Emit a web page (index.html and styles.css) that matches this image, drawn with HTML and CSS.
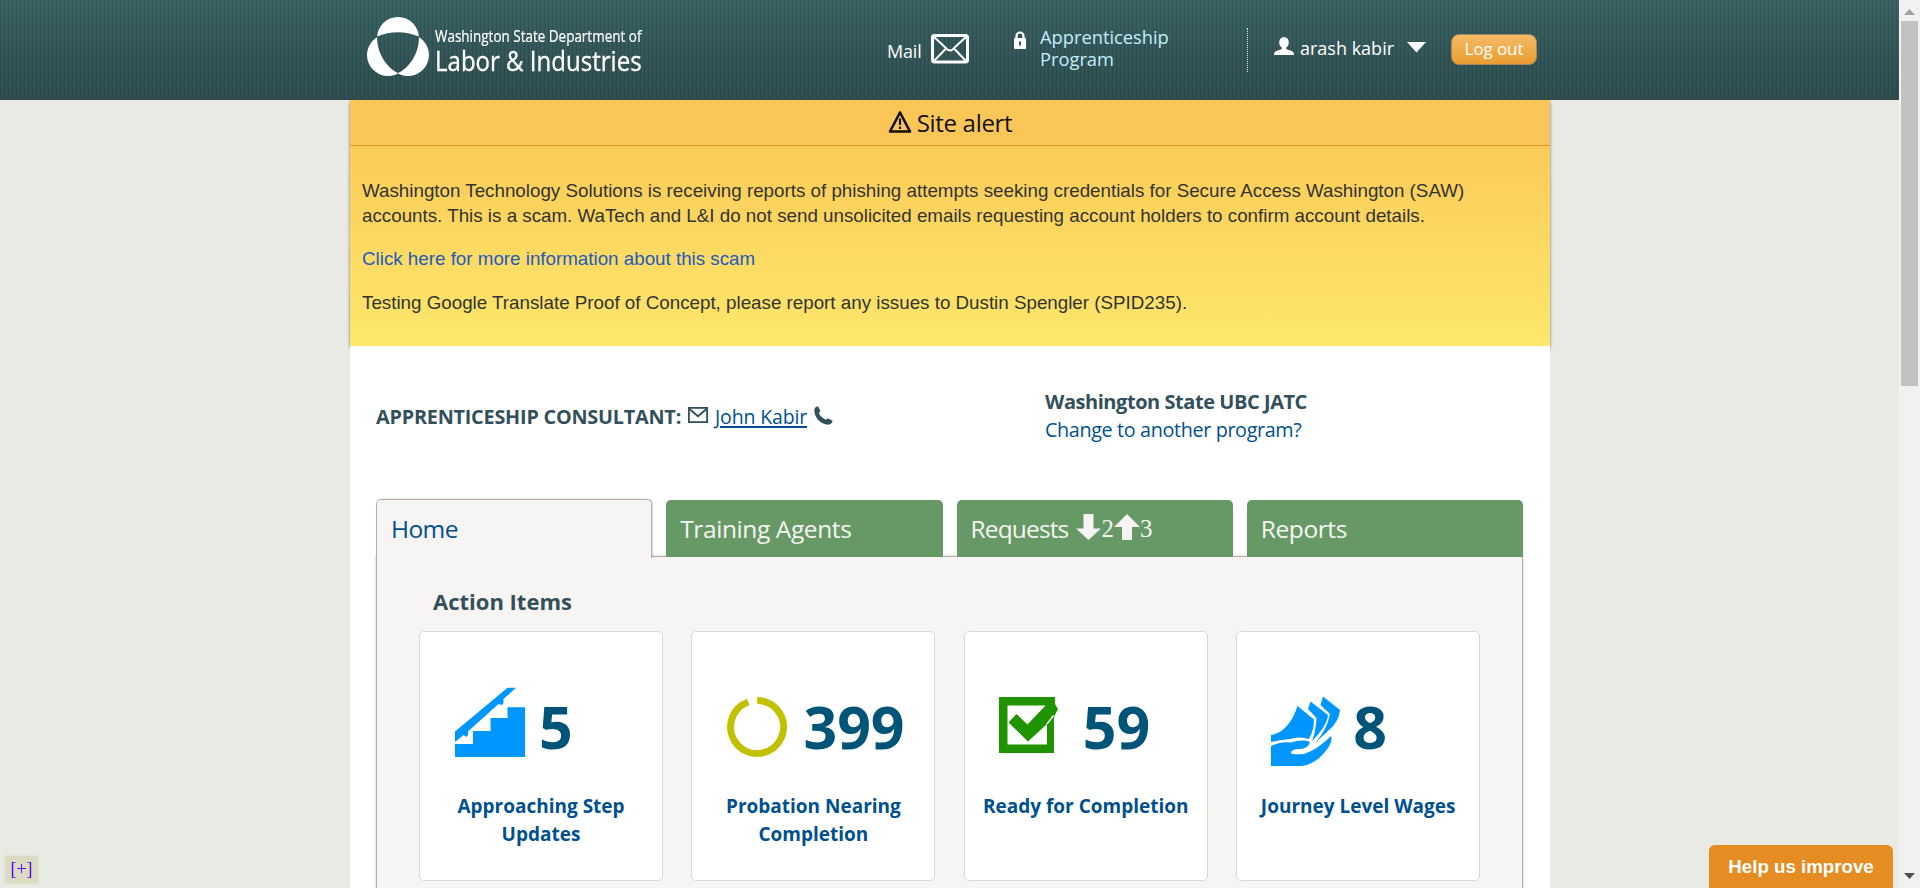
FILE: index.html
```html
<!DOCTYPE html>
<html lang="en">
<head>
<meta charset="utf-8">
<title>Apprenticeship Program</title>
<link rel="stylesheet" href="styles.css">
</head>
<body>
<div class="page">
  <header class="header">
    <div class="header-inner">
      <a class="logo">
        <svg class="logo-mark" width="64" height="62" viewBox="0 0 64 62">
          <defs><mask id="rings"><rect width="64" height="62" fill="#fff"/><path d="M11 20.500Q31.500 12 53 20.500C53 38 43 52 32 57C21 52 11 38 11 20.500z" fill="#000"/></mask></defs>
          <g mask="url(#rings)" fill="#fff"><circle cx="32" cy="22" r="21"/><circle cx="22" cy="39" r="21"/><circle cx="42" cy="39" r="21"/></g>
          <path d="M11.500 20.300Q9.500 21 8 22M52.500 20.300Q54.500 21 56 22" stroke="#325456" fill="none"/>
        </svg>
        <span class="logo-text"><span class="logo-small">Washington State Department of</span><span class="logo-big">Labor &amp; Industries</span></span>
      </a>
      <a class="mail">Mail</a>
      <svg class="mail-icon" width="38" height="30" viewBox="0 0 38 30" fill="none" stroke="#fff"><rect x="1.500" y="1.500" width="35" height="26.500" rx="2" stroke-width="3"/><path d="M2 2L16.500 15.500Q19 17.500 21.500 15.500L36 2M2.500 27.500L15 14.500M35.500 27.500L23 14.500" stroke-width="2"/></svg>
      <svg class="lock" width="12" height="18" viewBox="0 0 12 18"><path d="M2.500 8V5a3.500 3.500 0 0 1 7 0V8" fill="none" stroke="#fff" stroke-width="2.200"/><rect y="7" width="12" height="11" rx="1" fill="#fff"/><path d="M5 10.500h2v4H5z" fill="#325456"/></svg>
      <a class="program">Apprenticeship<br>Program</a>
      <div class="divider"></div>
      <svg class="user-icon" width="20" height="18" viewBox="0 0 20 18" fill="#fff"><ellipse cx="10" cy="5.500" rx="4.800" ry="5.500"/><path d="M7.800 8h4.400v4l6 2.300Q20 15 20 18H0Q0 15 1.800 14.300l6-2.300z"/></svg>
      <a class="user">arash kabir</a>
      <svg class="caret" width="19" height="11" viewBox="0 0 19 11"><path d="M0 0H19L9.500 10.500z" fill="#fff"/></svg>
      <a class="logout">Log out</a>
    </div>
  </header>

  <main class="content">
    <section class="alert">
      <h2 class="alert-title"><svg width="24" height="24" viewBox="0 0 24 24"><path d="M12 2.500L22 21.500H2z" fill="none" stroke="#111" stroke-width="2.600" stroke-linejoin="round"/><path d="M12 8.500v6.500M12 16.500v2.500" stroke="#111" stroke-width="2.200"/></svg><span>Site alert</span></h2>
      <div class="alert-body">
        <p>Washington Technology Solutions is receiving reports of phishing attempts seeking credentials for Secure Access Washington (SAW)<br>accounts. This is a scam. WaTech and L&amp;I do not send unsolicited emails requesting account holders to confirm account details.</p>
        <p><a class="alert-link">Click here for more information about this scam</a></p>
        <p>Testing Google Translate Proof of Concept, please report any issues to Dustin Spengler (SPID235).</p>
      </div>
    </section>

    <section class="intro">
      <div class="consultant">
        <strong class="consultant-label">APPRENTICESHIP CONSULTANT:</strong>
        <svg class="envelope" width="20" height="16" viewBox="0 0 20 16" fill="none" stroke="#33505a" stroke-width="1.800"><rect x=".9" y=".9" width="18.200" height="14.200"/><path d="M1.500 2L10 9.300L18.500 2"/></svg>
        <a class="consultant-name">John Kabir</a>
        <svg class="phone" width="19" height="19" viewBox="0 0 19 19"><path d="M4 .3L6.500 5.200L4.900 7C6 10 8.800 12.600 12 13.700L13.700 12.200L18.600 14.800C18.300 17 16.500 18.700 14.300 18.700C6 17.800 .4 11.500 .3 4.200C.4 2.200 1.800 .5 4 .3z" fill="#33505a"/></svg>
      </div>
      <div class="program-info">
        <strong>Washington State UBC JATC</strong>
        <a>Change to another program?</a>
      </div>
    </section>

    <nav class="tabs">
      <a class="tab tab-active">Home</a>
      <a class="tab">Training Agents</a>
      <a class="tab tab-requests"><span>Requests</span>
        <svg class="arrow arrow-down" width="25" height="27" viewBox="0 0 25 27"><path d="M7.500 0h10v14.500H25L12.500 26L0 14.500h7.500z" fill="#f6f5f3"/></svg><span class="count">2</span><svg class="arrow" width="26" height="27" viewBox="0 0 26 27"><path d="M13 0L26 13h-8v13H8V13H0z" fill="#f6f5f3"/></svg><span class="count">3</span></a>
      <a class="tab">Reports</a>
    </nav>
    <section class="panel">
      <h3 class="panel-title">Action Items</h3>
      <div class="cards">
        <a class="card">
          <div class="stat">
            <svg width="84" height="80" viewBox="0 0 84 80" fill="#0096ff"><path d="M70 20.300V70H0V57H18V44H35.500V31H52.500V20.300zM52.500 .8H61L48.500 12V16L47 18L43.500 17L13 44.500V48L11.500 50L8.500 48L0 55V44.500z"/></svg>
            <span class="number">5</span>
          </div>
          <div class="label">Approaching Step Updates</div>
        </a>
        <a class="card">
          <div class="stat">
            <svg width="76" height="80" viewBox="0 0 76 80"><path d="M30.200 13.500A26.500 26.500 0 1 1 21.300 15" fill="none" stroke="#c1c100" stroke-width="7"/></svg>
            <span class="number">399</span>
          </div>
          <div class="label">Probation Nearing Completion</div>
        </a>
        <a class="card">
          <div class="stat stat-left">
            <svg width="84" height="80" viewBox="0 0 84 80"><path d="M0 10H56V17L59 22L55 30V66H0zM8.500 18.500V57.500H48V37L29 54.500L9.500 35.500L17.500 27L28.500 37.500L46.500 18.500z" fill="#209400" fill-rule="evenodd"/><path d="M54.500 28.500L48 37" stroke="#fff" stroke-width="1.300"/></svg>
            <span class="number">59</span>
          </div>
          <div class="label">Ready for Completion</div>
        </a>
        <a class="card">
          <div class="stat stat-left">
            <svg width="82" height="80" viewBox="0 0 82 80" fill="#0096ff"><path d="M0 48Q18 45 26.500 19L43 32.500Q43 43 38 52Q28 49 19 52Q9 53 0 55z"/><path d="M37 22L39.500 14.500L57 28Q56 39 41 54Q45 44 45.500 31z"/><path d="M49.500 18L52 9.500L69 23Q68 35 57 44L44 56Q56 43 59 27z"/><path d="M0 59Q10 54 20 55.500Q31 52 39 55Q37 62 29 62Q20 62 20 66Q21 68 33 67Q46 63 60 49Q62 53 57 61Q46 77 31 79H0z"/></svg>
            <span class="number">8</span>
          </div>
          <div class="label">Journey Level Wages</div>
        </a>
      </div>
    </section>
  </main>
</div>
<aside class="scrollbar">
  <svg width="11" height="6" viewBox="0 0 11 6"><path d="M5.500 0L11 6H0z" fill="#a3a3a3"/></svg>
  <div class="thumb"></div>
  <svg class="scroll-down" width="11" height="6" viewBox="0 0 11 6"><path d="M0 0H11L5.500 6z" fill="#505050"/></svg>
</aside>
<a class="expand">[+]</a>
<a class="feedback">Help us improve</a>
</body>
</html>
```
FILE: styles.css
```css
* { box-sizing: border-box; }
body {
  margin: 0;
  height: 888px;
  overflow: hidden;
  display: flex;
  background: #e9eae3;
  font-family: "Open Sans", "Noto Sans", sans-serif;
  font-size: 20px;
  line-height: 28px;
  color: #33505a;
}
svg { display: block; flex: none; }
.page { width: 1899px; height: 888px; overflow: hidden; }
.header {
  height: 100px;
  background:
    repeating-linear-gradient(90deg, rgba(0,0,0,.07) 0 1px, transparent 1px 2px, rgba(255,255,255,.035) 2px 3px, transparent 3px 4px),
    linear-gradient(#376061, #2d4a4d);
  color: #fff;
}
.header-inner {
  width: 1200px;
  margin-left: 350px;
  padding-left: 16px;
  display: flex;
  align-items: flex-start;
  white-space: nowrap;
  font-size: 18px;
  line-height: 22px;
}
.logo { display: flex; width: 521px; padding-top: 16px; gap: 5px; }
.logo-text { display: flex; flex-direction: column; padding-top: 10px; }
.logo-small { font-size: 16px; line-height: 20px; transform: scaleX(.842); transform-origin: 0 0; -webkit-text-stroke: .2px; }
.logo-big { font-size: 27px; line-height: 30px; transform: scaleX(.89); transform-origin: 0 0; -webkit-text-stroke: .3px; }
.mail { width: 44px; padding-top: 40px; letter-spacing: -.2px; }
.mail-icon { margin-top: 34px; }
.lock { margin: 31px 14px 0 45px; }
.program { width: 207px; margin-top: 26px; font-size: 18.300px; color: #c3eefa; }
.divider { height: 44px; margin-top: 28px; border-left: 1px dotted #dfe8e8; }
.user-icon { margin: 37px 6px 0 26px; }
.user { width: 107px; margin-top: 37px; }
.caret { margin-top: 42px; }
.logout {
  margin: 34px 0 0 25px;
  width: 86px;
  height: 31px;
  border: 1px solid #a38461;
  border-radius: 8px;
  background: linear-gradient(#f5bb66, #e99d31);
  font-size: 17px;
  line-height: 28px;
  letter-spacing: -.1px;
  text-align: center;
}
.content { width: 1200px; height: 788px; margin-left: 350px; background: #fff; }
.alert {
  height: 246px;
  background: linear-gradient(#fac553, #fde76c);
  box-shadow: 0 2px 3px rgba(0,0,0,.5);
  clip-path: inset(0 -6px -3px -6px);
}
.alert-title {
  display: flex;
  justify-content: center;
  gap: 5px;
  height: 46px;
  margin: 0;
  border-bottom: 1px solid #e1932a;
  background: #fac657;
  color: #111;
  font-size: 24px;
  font-weight: 400;
  line-height: 46px;
  letter-spacing: -.300px;
}
.alert-title svg { margin-top: 10px; }
.alert-body {
  padding: 32px 12px 0;
  font-family: "Liberation Sans", Arial, sans-serif;
  font-size: 18.770px;
  line-height: 25px;
  color: #333;
  white-space: nowrap;
}
.alert-body p { margin: 0 0 18.400px; }
.alert-link { color: #245bbd; }
.intro {
  display: flex;
  height: 153px;
  background: #fff;
  position: relative;
  white-space: nowrap;
}
.consultant { display: flex; width: 695px; padding: 57px 0 0 26px; }
.consultant-label { width: 312px; font-size: 19.800px; letter-spacing: -.2px; }
.envelope { margin: 4px 7px 0 0; }
.consultant-name {
  font-size: 19.500px;
  letter-spacing: -.15px;
  color: #00508f;
  text-decoration: underline;
  text-decoration-thickness: 2px;
  text-underline-offset: 2px;
}
.phone { margin: 3px 0 0 7px; }
.program-info { display: flex; flex-direction: column; padding-top: 42px; letter-spacing: -.450px; }
.program-info a { color: #00508f; font-size: 19.800px; letter-spacing: -.370px; }
.tabs { display: grid; grid-template-columns: repeat(4, 1fr); gap: 14px; margin: 0 27px 0 26px; }
.tab {
  display: flex;
  height: 57px;
  margin-top: 1px;
  margin-bottom: -1px;
  padding-left: 14px;
  border-radius: 5px 5px 0 0;
  background: #669966;
  color: #f6f5f3;
  font-size: 24.500px;
  line-height: 57px;
  letter-spacing: -.400px;
}
.tab-active {
  position: relative;
  height: 59px;
  margin-top: 0;
  margin-bottom: -2px;
  padding-left: 14px;
  border: 1px solid #b9aea6;
  border-bottom: 0;
  background: #f6f5f3;
  color: #00508f;
  letter-spacing: -.600px;
  box-shadow: 1px 0 2px rgba(0,0,0,.15);
  clip-path: inset(-3px -4px 0 -3px);
}
.tab-requests { letter-spacing: -.850px; }
.arrow { margin-top: 14px; }
.arrow-down { margin-left: 8px; }
.count { font: 25px/58px "Liberation Serif", serif; letter-spacing: 0; }
.panel {
  height: 400px;
  margin: 0 27px 0 26px;
  padding: 29px 42px 0;
  border: 1px solid #b9aea6;
  background: #f6f5f3;
  box-shadow: 0 0 3px rgba(0,0,0,.2);
}
.panel-title { margin: 0 0 15px 14px; font-size: 22px; line-height: 30px; }
.cards { display: grid; grid-template-columns: repeat(4, 244px); gap: 28.400px; }
.card {
  height: 250px;
  padding: 55px 12px 0;
  border: 1px solid #d9d9d8;
  border-radius: 5px;
  background: #fff;
  color: #00508f;
  font-size: 19px;
  font-weight: 700;
  text-align: center;
}
.stat { display: flex; height: 105px; padding-left: 23px; }
.stat-left { padding-left: 22px; }
.number { font-size: 59px; line-height: 60px; padding-top: 9px; color: #005478; }
.scrollbar {
  width: 21px;
  height: 888px;
  background: #f1f1f1;
  display: flex;
  flex-direction: column;
  align-items: center;
  padding: 9px 0 9px;
}
.thumb { width: 17px; height: 365px; margin-top: 6px; background: #c1c1c1; }
.scroll-down { margin-top: auto; }
.expand {
  position: fixed;
  left: 5px;
  bottom: 5px;
  width: 33px;
  height: 27px;
  background: #dbdbc2;
  box-shadow: 0 0 3px #dbdbc2;
  font: 18px/27px "Liberation Serif", serif;
  text-align: center;
  color: #50f;
}
.feedback {
  position: fixed;
  right: 27px;
  bottom: 0;
  width: 184px;
  height: 43px;
  border-radius: 6px 6px 0 0;
  background: #e58c23;
  color: #fff;
  font: bold 18.700px/43px "Liberation Sans", Arial, sans-serif;
  text-align: center;
}
```
